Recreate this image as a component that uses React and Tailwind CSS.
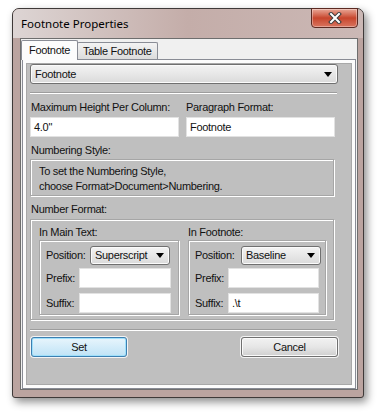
import React from 'react'

function Caret() {
  return (
    <svg width="8" height="5" viewBox="0 0 8 5">
      <path d="M0 0h8L4 5z" fill="#000" />
    </svg>
  )
}

function Combo({ text, className }) {
  return (
    <div className={`flex items-center justify-between rounded-[3px] border border-[#707070] bg-linear-to-b from-[#f4f4f4] to-[#dadada] pl-[4px] pr-[5px] shadow-[inset_0_0_0_1px_#fbfbfb] ${className}`}>
      <span>{text}</span>
      <Caret />
    </div>
  )
}

function TextBox({ value, className }) {
  return (
    <div className={`flex items-center border border-[#e2e2e2] bg-white pl-[3px] ${className}`}>
      {value}
    </div>
  )
}

function Separator() {
  return <div className="h-[2px] w-[307px] border-t border-b border-t-[#9d9d9d] border-b-white" />
}

function CloseButton() {
  return (
    <div className="-mt-px flex h-[20px] w-[47px] items-center justify-center rounded-b-[4px] border border-[#5b2a22] bg-linear-to-b from-[#e8a797] via-[#c7452c] to-[#d9745e] shadow-[inset_0_0_0_1px_rgba(255,255,255,0.35)]">
      <svg width="14" height="12" viewBox="0 0 14 12">
        <path d="M3 2l8 8M11 2l-8 8" stroke="#3d3d3d" strokeWidth="4" strokeLinecap="square" />
        <path d="M3 2l8 8M11 2l-8 8" stroke="#fff" strokeWidth="2" strokeLinecap="square" />
      </svg>
    </div>
  )
}

const etched = 'border border-[#a6a6a6] shadow-[inset_1px_1px_0_#fff,1px_1px_0_#fff]'

function NumberColumn({ title, position, suffix, width, inputWidth, labelWidth }) {
  return (
    <div className="flex flex-col">
      <div className="leading-[13px]">{title}</div>
      <div className={`mt-[1px] h-[75px] pl-[6px] pt-[5px] ${etched} ${width}`}>
        <div className="flex items-center">
          <span className={labelWidth}>Position:</span>
          <Combo text={position} className="h-[19px] w-[80px]" />
        </div>
        <div className="mt-[3px] flex items-center">
          <span className="w-[33px]">Prefix:</span>
          <TextBox value="" className={`h-[20px] ${inputWidth}`} />
        </div>
        <div className="mt-[5px] flex items-center">
          <span className="w-[33px]">Suffix:</span>
          <TextBox value={suffix} className={`h-[20px] ${inputWidth}`} />
        </div>
      </div>
    </div>
  )
}

export default function App() {
  return (
    <div className="h-[415px] w-[377px] bg-white pl-[12px] pt-[8px] font-[Liberation_Sans,Arial,sans-serif] text-[11px] tracking-[-0.3px] text-[#111]">
      <div className="flex h-[390px] w-[352px] flex-col rounded-t-[7px] rounded-b-[3px] border border-[#3e3938] bg-[#bba4a0] shadow-[3px_4px_9px_rgba(0,0,0,0.45)]">
        {/* title bar */}
        <div className="flex h-[29px] items-start justify-between rounded-t-[6px] bg-linear-to-r from-[#ddd5d4] via-[#c4ada9] to-[#cbb8b5] pl-[8px] pr-[5px]">
          <span className="self-center font-[Noto_Sans,sans-serif] text-[11.5px] tracking-normal text-black">Footnote Properties</span>
          <CloseButton />
        </div>

        {/* client area */}
        <div className="ml-[7px] flex h-[352px] w-[338px] flex-col border border-[#6e6e6e] bg-[#f0f0f0] pt-[1px]">
          <div className="flex h-[19px] items-end">
            <div className="relative z-10 -mb-px flex h-[20px] w-[57px] items-center rounded-t-[2px] border border-b-0 border-[#898c95] bg-[#fcfcfc] pl-[7px]">
              Footnote
            </div>
            <div className="-ml-px flex h-[17px] w-[81px] items-center rounded-t-[2px] border border-b-0 border-[#898c95] bg-linear-to-b from-[#f3f3f3] to-[#dcdcdc] pl-[5px]">
              Table Footnote
            </div>
          </div>

          <div className="ml-px w-[334px] flex-1 border border-[#898c95] bg-[#fcfcfc] p-[3px]">
            <div className="flex h-full flex-col items-start border border-[#a8a8a8] bg-[#bfbfbf] pl-[3px]">
              <Combo text="Footnote" className="h-[20px] w-[308px]" />

              <div className="mt-[8px]">
                <Separator />
              </div>

              <div className="mt-[7px] flex">
                <div className="w-[156px]">
                  <div className="pl-px leading-[13px]">Maximum Height Per Column:</div>
                  <TextBox value={'4.0"'} className="mt-[3px] h-[20px] w-[149px]" />
                </div>
                <div>
                  <div className="leading-[13px]">Paragraph Format:</div>
                  <TextBox value="Footnote" className="mt-[3px] h-[20px] w-[149px]" />
                </div>
              </div>

              <div className="mt-[7px] pl-px leading-[13px]">Numbering Style:</div>
              <div className={`mt-[2px] h-[37px] w-[304px] pl-[8px] pt-[4px] leading-[15px] ${etched}`}>
                <div>To set the Numbering Style,</div>
                <div>choose Format&gt;Document&gt;Numbering.</div>
              </div>

              <div className="mt-[7px] pl-px leading-[13px]">Number Format:</div>
              <div className={`mt-[3px] flex h-[101px] w-[304px] gap-[9px] pl-[8px] pt-[6px] ${etched}`}>
                <NumberColumn title="In Main Text:" position="Superscript" suffix="" width="w-[140px]" inputWidth="w-[92px]" labelWidth="w-[44px]" />
                <NumberColumn title="In Footnote:" position="Baseline" suffix=".\t" width="w-[138px]" inputWidth="w-[91px]" labelWidth="w-[46px]" />
              </div>

              <div className="mt-[9px]">
                <Separator />
              </div>

              <div className="mt-[6px] flex w-[308px] justify-between">
                <button className="ml-px flex h-[20px] w-[96px] items-center justify-center rounded-[3px] border border-[#3c7fb1] bg-linear-to-b from-[#e8f5fc] to-[#bfe3f6] shadow-[0_0_0_1px_#f4f4f4,inset_0_0_0_1px_#9fe0fb]">
                  Set
                </button>
                <button className="flex h-[20px] w-[97px] items-center justify-center rounded-[3px] border border-[#707070] bg-linear-to-b from-[#f2f2f2] via-[#e6e6e6] to-[#cfcfcf] shadow-[0_0_0_1px_#f4f4f4,inset_0_0_0_1px_#fafafa]">
                  Cancel
                </button>
              </div>
            </div>
          </div>
        </div>
      </div>
    </div>
  )
}
